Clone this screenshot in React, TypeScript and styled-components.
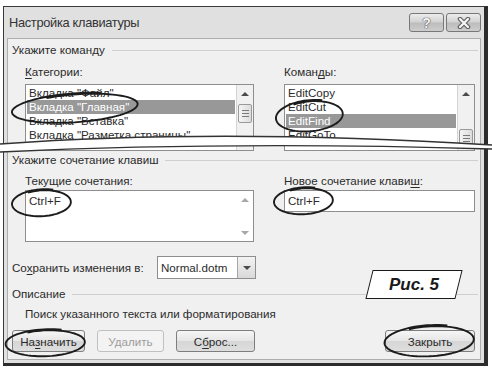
import React from "react"
import styled, { createGlobalStyle } from "styled-components"

const GlobalStyle = createGlobalStyle`
    html, body {
        margin: 0;
        padding: 0;
        background: #fff;
    }
    body {
        font-family: "Liberation Sans", Arial, sans-serif;
        font-size: 11.6px;
        color: #2b2b2b;
    }
`;

const Page = styled.div`
    position: relative;
    width: 492px;
    height: 373px;
    box-sizing: border-box;
    padding: 6px 0 0 3px;
    overflow: hidden;
    background: #fff;
    isolation: isolate;
`;

const Window = styled.div`
    width: 485px;
    height: 360px;
    box-sizing: border-box;
    background: #e0e0e0;
    border-left: 1px solid #3a3a3a;
    border-top: 1px solid #3a3a3a;
    border-right: 4px solid #2c2c2c;
    border-bottom: 3px solid #2c2c2c;
    padding: 0 3px 3px 3px;
    display: flex;
    flex-direction: column;
`;

const TitleBar = styled.div`
    height: 31px;
    display: flex;
    align-items: center;
    gap: 2px;
    padding-left: 2px;
`;

const Title = styled.div`
    flex: 1;
    font-size: 12.8px;
    letter-spacing: -0.3px;
    color: #333;
`;

const CaptionButton = styled.div`
    width: 35px;
    height: 19px;
    box-sizing: border-box;
    border: 1px solid #777;
    border-radius: 3px;
    background: linear-gradient(#ececec, #d2d2d2 48%, #bcbcbc 52%, #cdcdcd);
    display: flex;
    align-items: center;
    justify-content: center;
    font-weight: bold;
    font-size: 14px;
    color: #f4f4f4;
    text-shadow: 0 0 1px #555, 0 0 1px #555, 0 0 1px #555;
`;

const Body = styled.div`
    flex: 1;
    background: #f0f0f0;
    border: 1px solid #adadad;
    padding: 4px 2px 0 4px;
    display: flex;
    flex-direction: column;
`;

const GroupHeader = styled.div<{ $mt?: number }>`
    height: 14px;
    margin-top: ${p => p.$mt ?? 0}px;
    display: flex;
    align-items: center;
    gap: 7px;
    line-height: 14px;

    &::after {
        content: "";
        flex: 1;
        height: 1px;
        background: #cfcfcf;
    }
`;

const Columns = styled.div<{ $mt?: number }>`
    display: grid;
    grid-template-columns: 229px 191px;
    column-gap: 30px;
    margin: ${p => p.$mt ?? 0}px 0 0 13px;
    align-items: start;
`;

const Label = styled.div<{ $mb?: number }>`
    height: 14px;
    line-height: 14px;
    margin-bottom: ${p => p.$mb ?? 5}px;
`;

const Key = styled.span`
    text-decoration: underline;
    text-underline-offset: 2px;
`;

const ListBox = styled.div<{ $h: number }>`
    height: ${p => p.$h}px;
    box-sizing: border-box;
    border: 1px solid #8e8e8e;
    background: #fff;
    display: flex;
    overflow: hidden;
`;

const Items = styled.div<{ $pt?: number }>`
    flex: 1;
    padding: ${p => p.$pt ?? 1}px 1px 1px 1px;
`;

const Item = styled.div<{ $selected?: boolean }>`
    height: 14px;
    line-height: 14px;
    padding-left: 2px;
    white-space: nowrap;
    background: ${p => (p.$selected ? "#989898" : "transparent")};
    color: ${p => (p.$selected ? "#fff" : "#2b2b2b")};
`;

const ScrollBar = styled.div<{ $plain?: boolean }>`
    width: 17px;
    box-sizing: border-box;
    border-left: 1px solid ${p => (p.$plain ? "transparent" : "#d4d4d4")};
    background: ${p => (p.$plain ? "#fff" : "#f1f1f1")};
    display: flex;
    flex-direction: column;
    justify-content: ${p => (p.$plain ? "space-between" : "flex-start")};
`;

const ArrowCell = styled.div`
    height: 17px;
    display: flex;
    align-items: center;
    justify-content: center;
`;

const Arrow = styled.div<{ $down?: boolean; $dim?: boolean }>`
    width: 0;
    height: 0;
    border-left: 4px solid transparent;
    border-right: 4px solid transparent;
    ${p => (p.$down ? "border-top" : "border-bottom")}: 4px solid ${p => (p.$dim ? "#a8a8a8" : "#4a4a4a")};
`;

const Thumb = styled.div<{ $top: number }>`
    margin: ${p => p.$top}px 1px 0 1px;
    height: 19px;
    box-sizing: border-box;
    border: 1px solid #9a9a9a;
    border-radius: 2px;
    background: linear-gradient(90deg, #f4f4f4, #dcdcdc);
    display: flex;
    flex-direction: column;
    align-items: center;
    justify-content: center;
    gap: 2px;

    & > i {
        display: block;
        width: 7px;
        height: 1px;
        background: #7a7a7a;
    }
`;

const TextBox = styled.div`
    height: 22px;
    box-sizing: border-box;
    border: 1px solid #8e8e8e;
    background: #fff;
    padding-left: 3px;
    line-height: 20px;
`;

const SaveRow = styled.div`
    margin-top: 14px;
    height: 23px;
    display: flex;
    align-items: center;
`;

const SaveLabel = styled.div`
    width: 145px;
`;

const Combo = styled.div`
    width: 99px;
    height: 23px;
    box-sizing: border-box;
    border: 1px solid #8e8e8e;
    background: #fff;
    display: flex;
`;

const ComboText = styled.div`
    flex: 1;
    padding-left: 3px;
    line-height: 21px;
`;

const ComboDrop = styled.div`
    width: 17px;
    border-left: 1px solid #a6a6a6;
    background: linear-gradient(#f3f3f3, #d9d9d9);
    display: flex;
    align-items: center;
    justify-content: center;
`;

const Description = styled.div`
    margin: 6px 0 0 13px;
    height: 14px;
    line-height: 14px;
`;

const ButtonRow = styled.div`
    margin-top: 9px;
    display: flex;
    gap: 12px;
    padding-right: 3px;
`;

const Button = styled.div<{ $w: number; $disabled?: boolean; $push?: boolean }>`
    width: ${p => p.$w}px;
    height: 22px;
    box-sizing: border-box;
    margin-left: ${p => (p.$push ? "auto" : "0")};
    border: 1px solid ${p => (p.$disabled ? "#c0c0c0" : "#7e7e7e")};
    border-radius: 3px;
    background: ${p => (p.$disabled ? "#f3f3f3" : "linear-gradient(#f6f6f6, #e6e6e6 48%, #d6d6d6 52%, #dedede)")};
    color: ${p => (p.$disabled ? "#9c9c9c" : "#2b2b2b")};
    display: flex;
    align-items: center;
    justify-content: center;
`;

const Overlay = styled.svg`
    position: absolute;
    left: 0;
    top: 0;
    pointer-events: none;
`;

const FigureTag = styled.div`
    position: absolute;
    left: 369px;
    top: 270px;
    width: 90px;
    height: 29px;
    z-index: 2;
    isolation: isolate;
    display: flex;
    align-items: center;
    justify-content: center;
    font-family: "Liberation Sans", Arial, sans-serif;
    font-weight: bold;
    font-style: italic;
    font-size: 17px;
    color: #1a1a1a;

    &::before {
        content: "";
        position: absolute;
        inset: 0;
        background: #fff;
        border: 1.5px solid #1a1a1a;
        transform: skewX(-14deg);
        z-index: -1;
    }
`;

const TagText = styled.span`
    position: relative;
`;

// hand drawn loop: spiral a little so the ends overshoot at the top
const loop = (cx: number, cy: number, rx: number, ry: number, rot: number) => {
    const a = (rot * Math.PI) / 180;
    const start = -Math.PI / 2 - 0.5;
    const span = Math.PI * 2 + 0.9;
    const pts: string[] = [];
    for (let i = 0; i <= 80; i++) {
        const t = start + (span * i) / 80;
        const k = 0.97 + 0.09 * (i / 80);
        const x = Math.cos(t) * rx * k;
        const y = Math.sin(t) * ry * k;
        pts.push(`${(cx + x * Math.cos(a) - y * Math.sin(a)).toFixed(1)},${(cy + x * Math.sin(a) + y * Math.cos(a)).toFixed(1)}`);
    }
    return "M" + pts.join(" L");
};

const marks = [
    loop(76, 108, 62, 14, -4),
    loop(310, 116, 33, 15, -5),
    loop(42, 203, 29, 13, -3),
    loop(304, 201, 29, 13, -3),
    loop(46, 343, 39, 13, -2),
    loop(430, 341, 44, 15, -3),
];

const Scroll = ({ thumb }: { thumb: number }) => (
    <ScrollBar>
        <ArrowCell><Arrow /></ArrowCell>
        <Thumb $top={thumb}><i /><i /><i /></Thumb>
    </ScrollBar>
);

const App = () => {
    return (
        <>
            <GlobalStyle />
            <Page>
                <Window>
                    <TitleBar>
                        <Title>Настройка клавиатуры</Title>
                        <CaptionButton>?</CaptionButton>
                        <CaptionButton>
                            <svg width="14" height="12" viewBox="0 0 14 12">
                                <path d="M3 2 L11 10 M11 2 L3 10" stroke="#5a5a5a" strokeWidth="4.5" strokeLinecap="round" />
                                <path d="M3 2 L11 10 M11 2 L3 10" stroke="#f6f6f6" strokeWidth="2.4" strokeLinecap="round" />
                            </svg>
                        </CaptionButton>
                    </TitleBar>
                    <Body>
                        <GroupHeader>Укажите команду</GroupHeader>
                        <Columns $mt={8}>
                            <div>
                                <Label><Key>К</Key>атегории:</Label>
                                <ListBox $h={67}>
                                    <Items>
                                        <Item>Вкладка "Файл"</Item>
                                        <Item $selected>Вкладка "Главная"</Item>
                                        <Item>Вкладка "Вставка"</Item>
                                        <Item>Вкладка "Разметка страницы"</Item>
                                    </Items>
                                    <Scroll thumb={2} />
                                </ListBox>
                            </div>
                            <div>
                                <Label>Коман<Key>д</Key>ы:</Label>
                                <ListBox $h={67}>
                                    <Items>
                                        <Item>EditCopy</Item>
                                        <Item>EditCut</Item>
                                        <Item $selected>EditFind</Item>
                                        <Item>EditGoTo</Item>
                                    </Items>
                                    <Scroll thumb={27} />
                                </ListBox>
                            </div>
                        </Columns>

                        <GroupHeader $mt={2}>Укажите сочетание клавиш</GroupHeader>
                        <Columns $mt={7}>
                            <div>
                                <Label $mb={2}>Текущие сочетания:</Label>
                                <ListBox $h={52}>
                                    <Items $pt={3}>
                                        <Item>Ctrl+F</Item>
                                    </Items>
                                    <ScrollBar $plain>
                                        <ArrowCell><Arrow $dim /></ArrowCell>
                                        <ArrowCell><Arrow $down $dim /></ArrowCell>
                                    </ScrollBar>
                                </ListBox>
                            </div>
                            <div>
                                <Label $mb={2}>Новое сочетание клави<Key>ш</Key>:</Label>
                                <TextBox>Ctrl+F</TextBox>
                            </div>
                        </Columns>

                        <SaveRow>
                            <SaveLabel>Со<Key>х</Key>ранить изменения в:</SaveLabel>
                            <Combo>
                                <ComboText>Normal.dotm</ComboText>
                                <ComboDrop><Arrow $down /></ComboDrop>
                            </Combo>
                        </SaveRow>

                        <GroupHeader $mt={8}>Описание</GroupHeader>
                        <Description>Поиск указанного текста или форматирования</Description>

                        <ButtonRow>
                            <Button $w={73}>На<Key>з</Key>начить</Button>
                            <Button $w={67} $disabled>Удалить</Button>
                            <Button $w={79}>С<Key>б</Key>рос...</Button>
                            <Button $w={90} $push>Закрыть</Button>
                        </ButtonRow>
                    </Body>
                </Window>

                <Overlay width="492" height="373" viewBox="0 0 492 373">
                    <path d="M0,144 Q220,128 492,145 L492,149 Q230,141 0,152 Z" fill="#fff" />
                    <path d="M0,144 Q220,128 492,145" fill="none" stroke="#333" strokeWidth="1.3" />
                    <path d="M0,152 Q230,141 492,149" fill="none" stroke="#333" strokeWidth="1.3" />
                    {marks.map((d, i) => (
                        <path key={i} d={d} fill="none" stroke="#1c1c1c" strokeWidth="1.9" strokeLinejoin="round" />
                    ))}
                </Overlay>

                <FigureTag><TagText>Рис. 5</TagText></FigureTag>
            </Page>
        </>
    )
}

export default App;
